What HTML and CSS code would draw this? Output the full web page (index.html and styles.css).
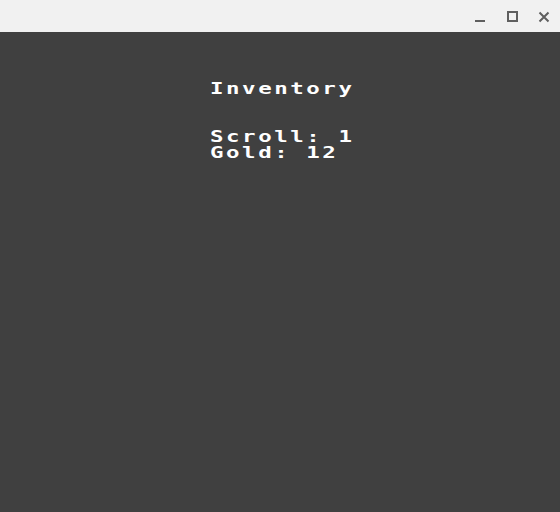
FILE: index.html
```html
<!DOCTYPE html>
<html>
<head>
<meta charset="utf-8">
<link rel="stylesheet" href="styles.css">
</head>
<body>
<div class="titlebar">
  <div class="controls">
    <svg class="ctl" width="12" height="12" viewBox="0 0 12 12"><rect x="1" y="9" width="10" height="2" fill="#5f5f5f"/></svg>
    <svg class="ctl" width="12" height="12" viewBox="0 0 12 12"><rect x="2" y="1" width="9" height="9" fill="none" stroke="#5f5f5f" stroke-width="2"/></svg>
    <svg class="ctl" width="12" height="12" viewBox="0 0 12 12"><path d="M1.5 1.5 L10.5 10.5 M10.5 1.5 L1.5 10.5" stroke="#5f5f5f" stroke-width="2"/></svg>
  </div>
</div>
<main class="screen">
  <div class="text">
    <div class="line">Inventory</div>
    <div class="line blank"></div>
    <div class="line blank"></div>
    <div class="line">Scroll: 1</div>
    <div class="line">Gold: 12</div>
  </div>
</main>
</body>
</html>
```

FILE: styles.css
```css
html, body {
  margin: 0;
  padding: 0;
  height: 100%;
  background: #404040;
}
body {
  display: flex;
  flex-direction: column;
}
.titlebar {
  height: 32px;
  background: #f1f1f1;
  display: flex;
  justify-content: flex-end;
  align-items: center;
}
.controls {
  display: flex;
  gap: 20px;
  padding-right: 10px;
  padding-top: 1px;
}
.ctl {
  display: block;
}
.screen {
  flex: 1;
  padding: 49px 0 0 210px;
  overflow: hidden;
}
.text {
  width: max-content;
  font-family: "DejaVu Sans Mono", monospace;
  font-weight: bold;
  font-size: 16px;
  letter-spacing: 1.83px;
  line-height: 16px;
  color: #ffffff;
  transform: scaleX(1.4);
  transform-origin: left top;
}
.line {
  height: 16px;
  white-space: pre;
}
```
